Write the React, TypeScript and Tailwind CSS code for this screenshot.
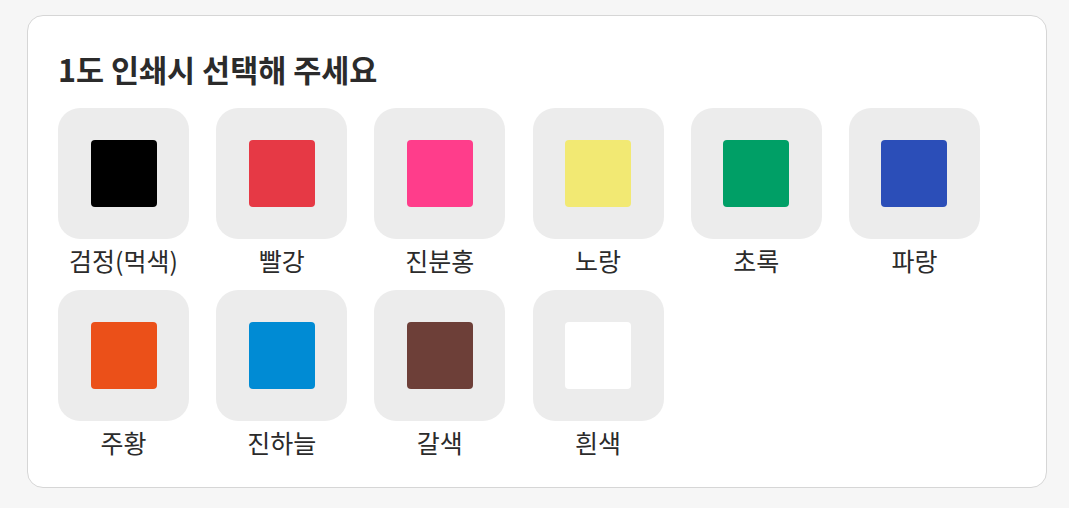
import React from "react";

const colors: { name: string; hex: string }[] = [
  { name: "검정(먹색)", hex: "#000000" },
  { name: "빨강", hex: "#e63945" },
  { name: "진분홍", hex: "#ff3d8b" },
  { name: "노랑", hex: "#f2e973" },
  { name: "초록", hex: "#009f66" },
  { name: "파랑", hex: "#2b4eb8" },
  { name: "주황", hex: "#eb5019" },
  { name: "진하늘", hex: "#008bd4" },
  { name: "갈색", hex: "#6d3f38" },
  { name: "흰색", hex: "#ffffff" },
];

export default function App() {
  return (
    <div
      className="min-h-[508px] bg-[#f6f6f6] pt-[15px] pb-[20px] pl-[27px] pr-[22px]"
      style={{ fontFamily: '"Noto Sans CJK KR", "Noto Sans", sans-serif' }}
    >
      <div className="h-[473px] rounded-[16px] border border-[#d6d6d6] bg-white px-[30px] pt-[31px]">
        <h1 className="text-[30.5px] font-bold leading-[45px] text-[#2b2b2b]">
          1도 인쇄시 선택해 주세요
        </h1>
        <div className="mt-[16px] grid grid-cols-[repeat(6,131px)] gap-x-[27.2px] gap-y-[15px]">
          {colors.map((c) => (
            <div key={c.name} className="flex flex-col items-center">
              <div className="flex h-[131px] w-[131px] items-center justify-center rounded-[22px] bg-[#ececec]">
                <div
                  className="h-[67px] w-[66px] rounded-[4px]"
                  style={{ backgroundColor: c.hex }}
                />
              </div>
              <div className="mt-[6px] text-[25px] leading-[30px] text-[#2b2b2b]">
                {c.name}
              </div>
            </div>
          ))}
        </div>
      </div>
    </div>
  );
}
